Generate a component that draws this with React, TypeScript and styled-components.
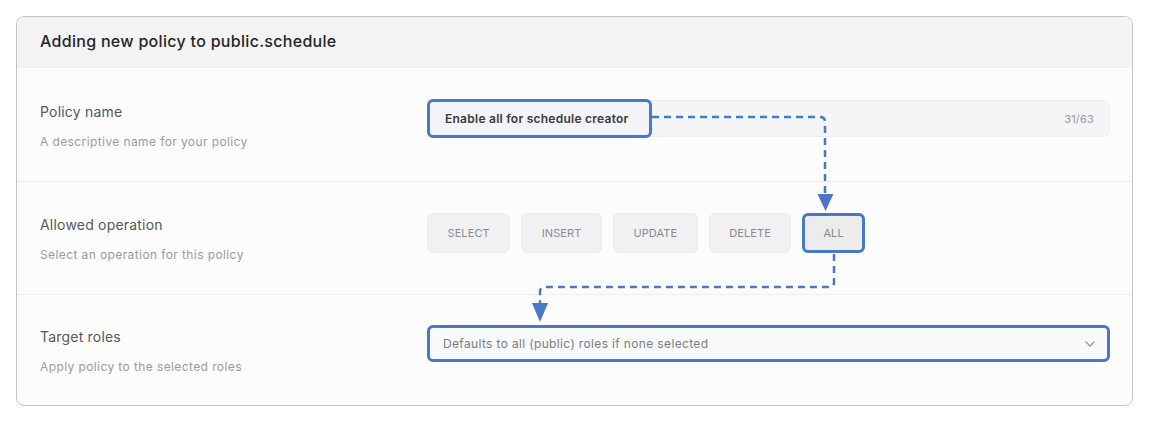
import React from "react";
import styled, { createGlobalStyle } from "styled-components";

const GlobalStyle = createGlobalStyle`
  html, body { margin: 0; padding: 0; background: #ffffff; }
  body { font-family: Inter, "Noto Sans", "DejaVu Sans", sans-serif; -webkit-font-smoothing: antialiased; }
  * { box-sizing: border-box; }
`;

const BLUE = "#4a77c6";

const Page = styled.div`
  position: relative;
  width: 1152px;
  height: 421px;
  padding: 16px 19px 15px 16px;
`;

const Card = styled.section`
  border: 1px solid #c4c4c6;
  border-radius: 8px;
  overflow: hidden;
  background: #fcfcfd;
  height: 390px;
  display: flex;
  flex-direction: column;
`;

const Header = styled.header`
  flex: none;
  height: 51px;
  background: #f3f3f4;
  display: flex;
  align-items: center;
  padding: 0 23px 2px;
  border-bottom: 1px solid #efeff0;
`;

const Title = styled.h2`
  margin: 0;
  font-size: 16px;
  font-weight: 500;
  color: #262626;
  letter-spacing: 0.3px;
`;

const Row = styled.div<{ $last?: boolean; $top: number }>`
  display: grid;
  grid-template-columns: 387px 1fr;
  align-items: start;
  padding: ${(p) => p.$top}px 22px 29px 23px;
  border-bottom: ${(p) => (p.$last ? "none" : "1px solid #ececee")};
  flex: ${(p) => (p.$last ? "1 1 auto" : "none")};
`;

const LabelBlock = styled.div`
  display: flex;
  flex-direction: column;
  gap: 8px;
`;

const Label = styled.div`
  font-size: 14px;
  line-height: 24px;
  letter-spacing: 0.2px;
  color: #575757;
`;

const Description = styled.div`
  font-size: 12px;
  line-height: 20px;
  letter-spacing: 0.4px;
  color: #9b9b9e;
`;

const InputBox = styled.div`
  height: 37px;
  background: #f3f5f7;
  border: 1px solid #eceff2;
  border-radius: 6px;
  display: flex;
  align-items: center;
  justify-content: space-between;
  padding-right: 15px;
`;

const Highlight = styled.div`
  height: 39px;
  margin: -1px 0 -1px -1px;
  border: 3px solid ${BLUE};
  border-radius: 6px;
  background: #f2f4f7;
  display: flex;
  align-items: center;
  padding: 0 20px 0 15px;
  font-size: 12px;
  font-weight: 600;
  letter-spacing: 0.25px;
  color: #3a3a3a;
`;

const Counter = styled.span`
  font-size: 11px;
  letter-spacing: 0.2px;
  color: #9a9a9d;
`;

const Operations = styled.div`
  display: flex;
  gap: 11px;
`;

const OpButton = styled.button<{ $active?: boolean }>`
  height: 40px;
  padding: 0 ${(p) => (p.$active ? "18px" : "19.5px")};
  border-radius: 6px;
  border: ${(p) => (p.$active ? `3px solid ${BLUE}` : "1px solid #ededf0")};
  background: ${(p) => (p.$active ? "#ececed" : "#f1f1f3")};
  font-family: inherit;
  font-size: 11px;
  letter-spacing: 0.1px;
  color: #8a8a8d;
  text-transform: uppercase;
  cursor: pointer;
`;

const SelectBox = styled.div`
  height: 37px;
  border: 3px solid ${BLUE};
  border-radius: 6px;
  background: #f8f9fa;
  display: flex;
  align-items: center;
  justify-content: space-between;
  padding: 0 12px 0 13px;
  font-size: 12px;
  letter-spacing: 0.35px;
  color: #7d7d80;
`;

const Overlay = styled.svg`
  position: absolute;
  left: 0;
  top: 0;
  pointer-events: none;
`;

const rows = [
  { label: "Policy name", desc: "A descriptive name for your policy" },
  { label: "Allowed operation", desc: "Select an operation for this policy" },
  { label: "Target roles", desc: "Apply policy to the selected roles" },
];

const ops = ["select", "insert", "update", "delete", "all"];

export default function App() {
  return (
    <>
      <GlobalStyle />
      <Page>
        <Card>
          <Header>
            <Title>Adding new policy to public.schedule</Title>
          </Header>
          <Row $top={32}>
            <LabelBlock>
              <Label>{rows[0].label}</Label>
              <Description>{rows[0].desc}</Description>
            </LabelBlock>
            <InputBox>
              <Highlight>Enable all for schedule creator</Highlight>
              <Counter>31/63</Counter>
            </InputBox>
          </Row>
          <Row $top={31}>
            <LabelBlock>
              <Label>{rows[1].label}</Label>
              <Description>{rows[1].desc}</Description>
            </LabelBlock>
            <Operations>
              {ops.map((o) => (
                <OpButton key={o} $active={o === "all"}>
                  {o}
                </OpButton>
              ))}
            </Operations>
          </Row>
          <Row $top={30} $last>
            <LabelBlock>
              <Label>{rows[2].label}</Label>
              <Description>{rows[2].desc}</Description>
            </LabelBlock>
            <SelectBox>
              <span>Defaults to all (public) roles if none selected</span>
              <svg width="10" height="6" viewBox="0 0 10 6">
                <path d="M1 1 L5 5 L9 1" fill="none" stroke="#9a9a9d" strokeWidth="1.3" strokeLinecap="round" strokeLinejoin="round" />
              </svg>
            </SelectBox>
          </Row>
        </Card>
        <Overlay width="1152" height="421" viewBox="0 0 1152 421">
          <g fill="none" stroke={BLUE} strokeWidth="2.5" strokeDasharray="7 5">
            <path d="M652 117 H820 Q825 117 825 122 V196" />
            <path d="M834 254 V282 Q834 287 829 287 H545 Q540 287 540 292 V303" />
          </g>
          <polygon points="817.5,194 833.5,194 825.5,211" fill={BLUE} />
          <polygon points="532,303 548,303 540,322" fill={BLUE} />
        </Overlay>
      </Page>
    </>
  );
}
